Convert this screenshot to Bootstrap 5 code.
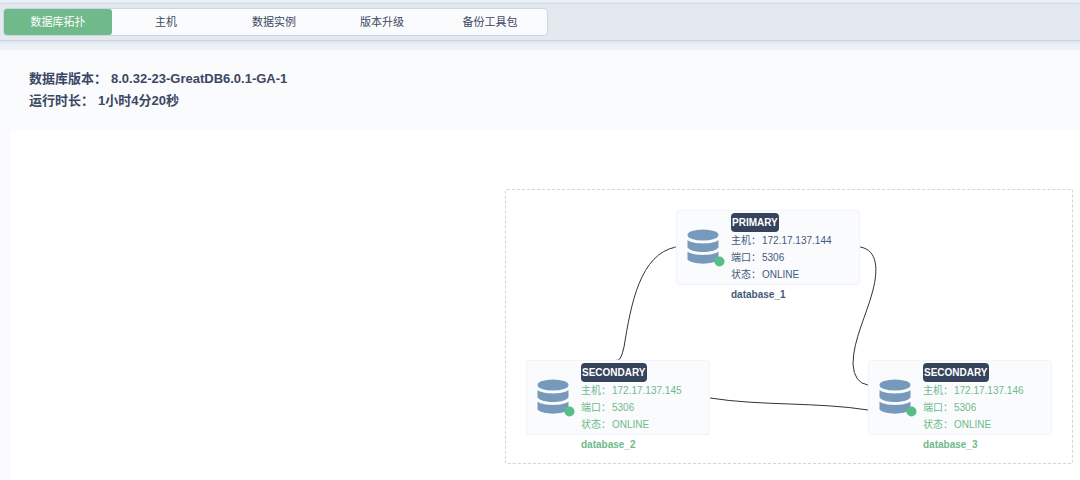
<!DOCTYPE html>
<html lang="zh-CN">
<head>
<meta charset="utf-8">
<meta name="viewport" content="width=device-width, initial-scale=1">
<title>数据库拓扑</title>
<link rel="stylesheet" href="https://cdn.jsdelivr.net/npm/bootstrap@5.3.0/dist/css/bootstrap.min.css">
<style>
body { font-family: "Liberation Sans", "Noto Sans CJK SC", sans-serif; font-size: 12px; color: #3b4863; background: #ecf1f8; }
.toolbar { margin-top: 3px; padding: 4px 3px; background: #e4e8ef; border-top: 1px solid #d3d8e1; border-bottom: 1px solid #cdd3dd; box-shadow: 0 1px 4px #d5dbe6; }
.tabs { padding-right: 3px; background: #fafbfd; border: 1px solid #cfd6e1; border-radius: 4px; }
.tabs .nav-link { width: 108px; height: 26px; padding: 0; line-height: 26px; font-size: 11px; color: #3b4863; border-radius: 3px; }
.tabs .nav-link.active { background: #70b98b; color: #fff; }
.page { margin-top: 9px; background: #fafbfd; min-height: calc(100vh - 50px); }
.info { padding: 18px 29px; line-height: 22px; font-size: 13px; font-weight: 600; }
.canvas { margin-left: 11px; padding: 59px 7px 16px; background: #fff; flex-grow: 1; }
.group { position: relative; width: 568px; height: 275px; border: 1px dashed #d4d4d4; border-radius: 2px; }
.edges { position: absolute; left: -1px; top: -1px; }
.db-node { position: absolute; width: 184px; }
.node-1 { left: 170px; top: 20px; color: #44597d; }
.node-2 { left: 20px; top: 170px; color: #70b98b; }
.node-3 { left: 362px; top: 170px; color: #70b98b; }
.node-box { height: 75px; padding: 2px 10px; background: #fafbfd; border: 1px solid #f0f4fa; border-radius: 3px; }
.db-icon { margin-top: 16px; }
.role { height: 19px; padding: 0 1px; line-height: 19px; font-size: 10px; font-weight: 600; background: #36435d; color: #fff; border-radius: 4px; }
.facts { font-size: 10px; line-height: 17px; }
.facts dt { width: 31px; font-weight: 400; white-space: nowrap; }
.db-name { padding-left: 55px; font-size: 10px; font-weight: 700; line-height: 20px; }
</style>
</head>
<body>
<header class="toolbar d-flex">
  <nav class="tabs nav flex-nowrap text-center">
    <a class="nav-link active" href="#" aria-current="page">数据库拓扑</a>
    <a class="nav-link" href="#">主机</a>
    <a class="nav-link" href="#">数据实例</a>
    <a class="nav-link" href="#">版本升级</a>
    <a class="nav-link" href="#">备份工具包</a>
  </nav>
</header>
<main class="page d-flex flex-column">
  <section class="info">
    <div class="d-flex"><span class="me-1">数据库版本：</span><span>8.0.32-23-GreatDB6.0.1-GA-1</span></div>
    <div class="d-flex"><span class="me-1">运行时长：</span><span>1小时4分20秒</span></div>
  </section>
  <section class="canvas d-flex justify-content-end align-items-start">
    <div class="group flex-shrink-0">
      <svg class="edges" width="568" height="275" fill="none" stroke="#333" aria-hidden="true">
        <path d="M171 58C135 65 126 115 119 158Q116 171 113 171"/>
        <path d="M355 58C373 61 373 81 368 101C362 125 348 151 348 175Q349 194 363 196"/>
        <path d="M205 209C255 217 314 213 363 221"/>
        <path d="M169 58h3M354 58h2M111 171h4M204 209h2M362 196h2M362 221h2" stroke="#8fc6e6"/>
      </svg>
      <article class="db-node node-1">
        <div class="node-box d-flex">
          <svg class="db-icon flex-shrink-0" width="44" height="40" aria-hidden="true"><g fill="#7699bc"><ellipse cx="16" cy="6" rx="15.500" ry="5.600"/><path d="M.5 11C5 15.500 27 15.500 31.500 11V18.500C27 24.500 5 24.500 .5 18.500ZM.5 22.500C5 27 27 27 31.500 22.500V30.500C27 36 5 36 .5 30.500Z"/></g><circle cx="32.500" cy="32.500" r="5" fill="#58bd86"/></svg>
          <div>
            <div class="d-flex"><span class="role">PRIMARY</span></div>
            <dl class="facts mb-0">
              <div class="d-flex"><dt>主机：</dt><dd class="mb-0">172.17.137.144</dd></div>
              <div class="d-flex"><dt>端口：</dt><dd class="mb-0">5306</dd></div>
              <div class="d-flex"><dt>状态：</dt><dd class="mb-0">ONLINE</dd></div>
            </dl>
          </div>
        </div>
        <div class="db-name">database_1</div>
      </article>
      <article class="db-node node-2">
        <div class="node-box d-flex">
          <svg class="db-icon flex-shrink-0" width="44" height="40" aria-hidden="true"><g fill="#7699bc"><ellipse cx="16" cy="6" rx="15.500" ry="5.600"/><path d="M.5 11C5 15.500 27 15.500 31.500 11V18.500C27 24.500 5 24.500 .5 18.500ZM.5 22.500C5 27 27 27 31.500 22.500V30.500C27 36 5 36 .5 30.500Z"/></g><circle cx="32.500" cy="32.500" r="5" fill="#58bd86"/></svg>
          <div>
            <div class="d-flex"><span class="role">SECONDARY</span></div>
            <dl class="facts mb-0">
              <div class="d-flex"><dt>主机：</dt><dd class="mb-0">172.17.137.145</dd></div>
              <div class="d-flex"><dt>端口：</dt><dd class="mb-0">5306</dd></div>
              <div class="d-flex"><dt>状态：</dt><dd class="mb-0">ONLINE</dd></div>
            </dl>
          </div>
        </div>
        <div class="db-name">database_2</div>
      </article>
      <article class="db-node node-3">
        <div class="node-box d-flex">
          <svg class="db-icon flex-shrink-0" width="44" height="40" aria-hidden="true"><g fill="#7699bc"><ellipse cx="16" cy="6" rx="15.500" ry="5.600"/><path d="M.5 11C5 15.500 27 15.500 31.500 11V18.500C27 24.500 5 24.500 .5 18.500ZM.5 22.500C5 27 27 27 31.500 22.500V30.500C27 36 5 36 .5 30.500Z"/></g><circle cx="32.500" cy="32.500" r="5" fill="#58bd86"/></svg>
          <div>
            <div class="d-flex"><span class="role">SECONDARY</span></div>
            <dl class="facts mb-0">
              <div class="d-flex"><dt>主机：</dt><dd class="mb-0">172.17.137.146</dd></div>
              <div class="d-flex"><dt>端口：</dt><dd class="mb-0">5306</dd></div>
              <div class="d-flex"><dt>状态：</dt><dd class="mb-0">ONLINE</dd></div>
            </dl>
          </div>
        </div>
        <div class="db-name">database_3</div>
      </article>
    </div>
  </section>
</main>
<script src="https://cdn.jsdelivr.net/npm/bootstrap@5.3.0/dist/js/bootstrap.bundle.min.js"></script>
</body>
</html>
